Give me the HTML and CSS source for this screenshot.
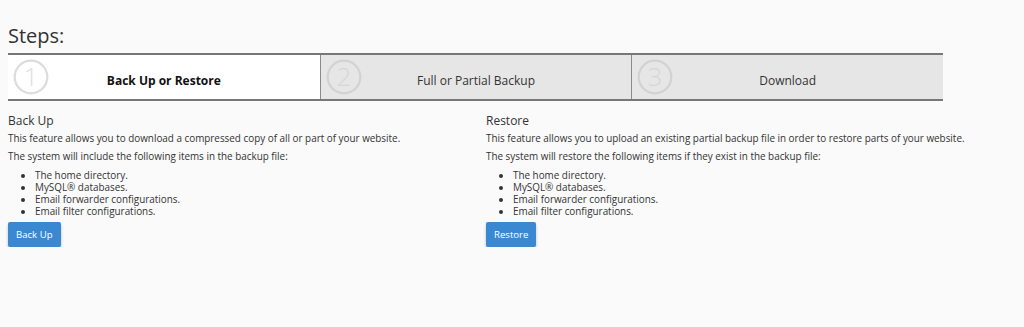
FILE: index.html
```html
<!DOCTYPE html>
<html lang="en">
<head>
<meta charset="utf-8">
<title>Backup Wizard</title>
<link rel="stylesheet" href="styles.css">
</head>
<body>
<div class="page">
  <h1 class="title">Steps:</h1>
  <div class="steps">
    <div class="step active">
      <svg class="num" width="36" height="36" viewBox="0 0 36 36"><circle cx="18" cy="18" r="16.3" fill="none" stroke="#dcdcdc" stroke-width="2.2"/><text x="18" y="27" text-anchor="middle">1</text></svg>
      <span class="label">Back Up or Restore</span>
    </div>
    <div class="step">
      <svg class="num" width="36" height="36" viewBox="0 0 36 36"><circle cx="18" cy="18" r="16.3" fill="none" stroke="#d2d2d2" stroke-width="2.2"/><text x="18" y="27" text-anchor="middle">2</text></svg>
      <span class="label">Full or Partial Backup</span>
    </div>
    <div class="step">
      <svg class="num" width="36" height="36" viewBox="0 0 36 36"><circle cx="18" cy="18" r="16.3" fill="none" stroke="#d2d2d2" stroke-width="2.2"/><text x="18" y="27" text-anchor="middle">3</text></svg>
      <span class="label">Download</span>
    </div>
  </div>
  <div class="cols">
    <section class="col">
      <h2 class="sub">Back Up</h2>
      <p class="text">This feature allows you to download a compressed copy of all or part of your website.</p>
      <p class="text">The system will include the following items in the backup file:</p>
      <ul class="items">
        <li>The home directory.</li>
        <li>MySQL® databases.</li>
        <li>Email forwarder configurations.</li>
        <li>Email filter configurations.</li>
      </ul>
      <button class="btn" type="button">Back Up</button>
    </section>
    <section class="col">
      <h2 class="sub">Restore</h2>
      <p class="text">This feature allows you to upload an existing partial backup file in order to restore parts of your website.</p>
      <p class="text">The system will restore the following items if they exist in the backup file:</p>
      <ul class="items">
        <li>The home directory.</li>
        <li>MySQL® databases.</li>
        <li>Email forwarder configurations.</li>
        <li>Email filter configurations.</li>
      </ul>
      <button class="btn" type="button">Restore</button>
    </section>
  </div>
</div>
</body>
</html>
```
FILE: styles.css
```css
html, body {
  margin: 0;
  padding: 0;
  background: #fafafa;
}
body {
  font-family: "Open Sans", "Liberation Sans", sans-serif;
  color: #333;
}
.page {
  width: 935px;
  padding: 0 8px;
}
.title {
  margin: 0;
  padding-top: 22px;
  font-size: 20px;
  font-weight: 400;
  line-height: 28px;
  color: #333;
}
.steps {
  display: flex;
  margin-top: 3px;
  border-top: 2px solid #777;
  border-bottom: 2px solid #777;
  height: 44px;
  background: #e6e6e6;
}
.step {
  flex: 1 1 0;
  display: grid;
  grid-template-columns: 36px 1fr 36px;
  align-items: center;
  padding: 0 5px;
  border-left: 1px solid #8a8a8a;
}
.step:first-child {
  border-left: 0;
  flex-basis: 1px;
}
.step.active {
  background: #fff;
}
.num {
  display: block;
  overflow: visible;
}
.num text {
  font-family: "Open Sans", "Liberation Sans", sans-serif;
  font-weight: 300;
  font-size: 26px;
  fill: #d6d6d6;
}
.step.active .num text {
  fill: #e0e0e0;
}
.label {
  text-align: center;
  font-size: 12px;
  padding-top: 6px;
  color: #333;
}
.step.active .label {
  font-weight: 700;
  color: #111;
}
.cols {
  display: grid;
  grid-template-columns: 478px 1fr;
  margin-top: 12px;
}
.col {
  white-space: nowrap;
}
.sub {
  margin: 0;
  font-size: 12px;
  font-weight: 400;
  line-height: 16px;
  color: #333;
}
.text {
  margin: 3px 0 6px;
  font-size: 9.9px;
  line-height: 12px;
  color: #333;
}
.items {
  margin: 7px 0 5px;
  padding-left: 27px;
  font-size: 9.9px;
  line-height: 12px;
}
.btn {
  display: block;
  height: 25px;
  padding: 0 8px;
  border: 0;
  border-radius: 2px;
  background: #3a88d2;
  color: #fff;
  font-family: "Open Sans", "Liberation Sans", sans-serif;
  font-size: 9.6px;
  box-shadow: 0 2px 3px rgba(0, 0, 0, 0.25);
}
```
